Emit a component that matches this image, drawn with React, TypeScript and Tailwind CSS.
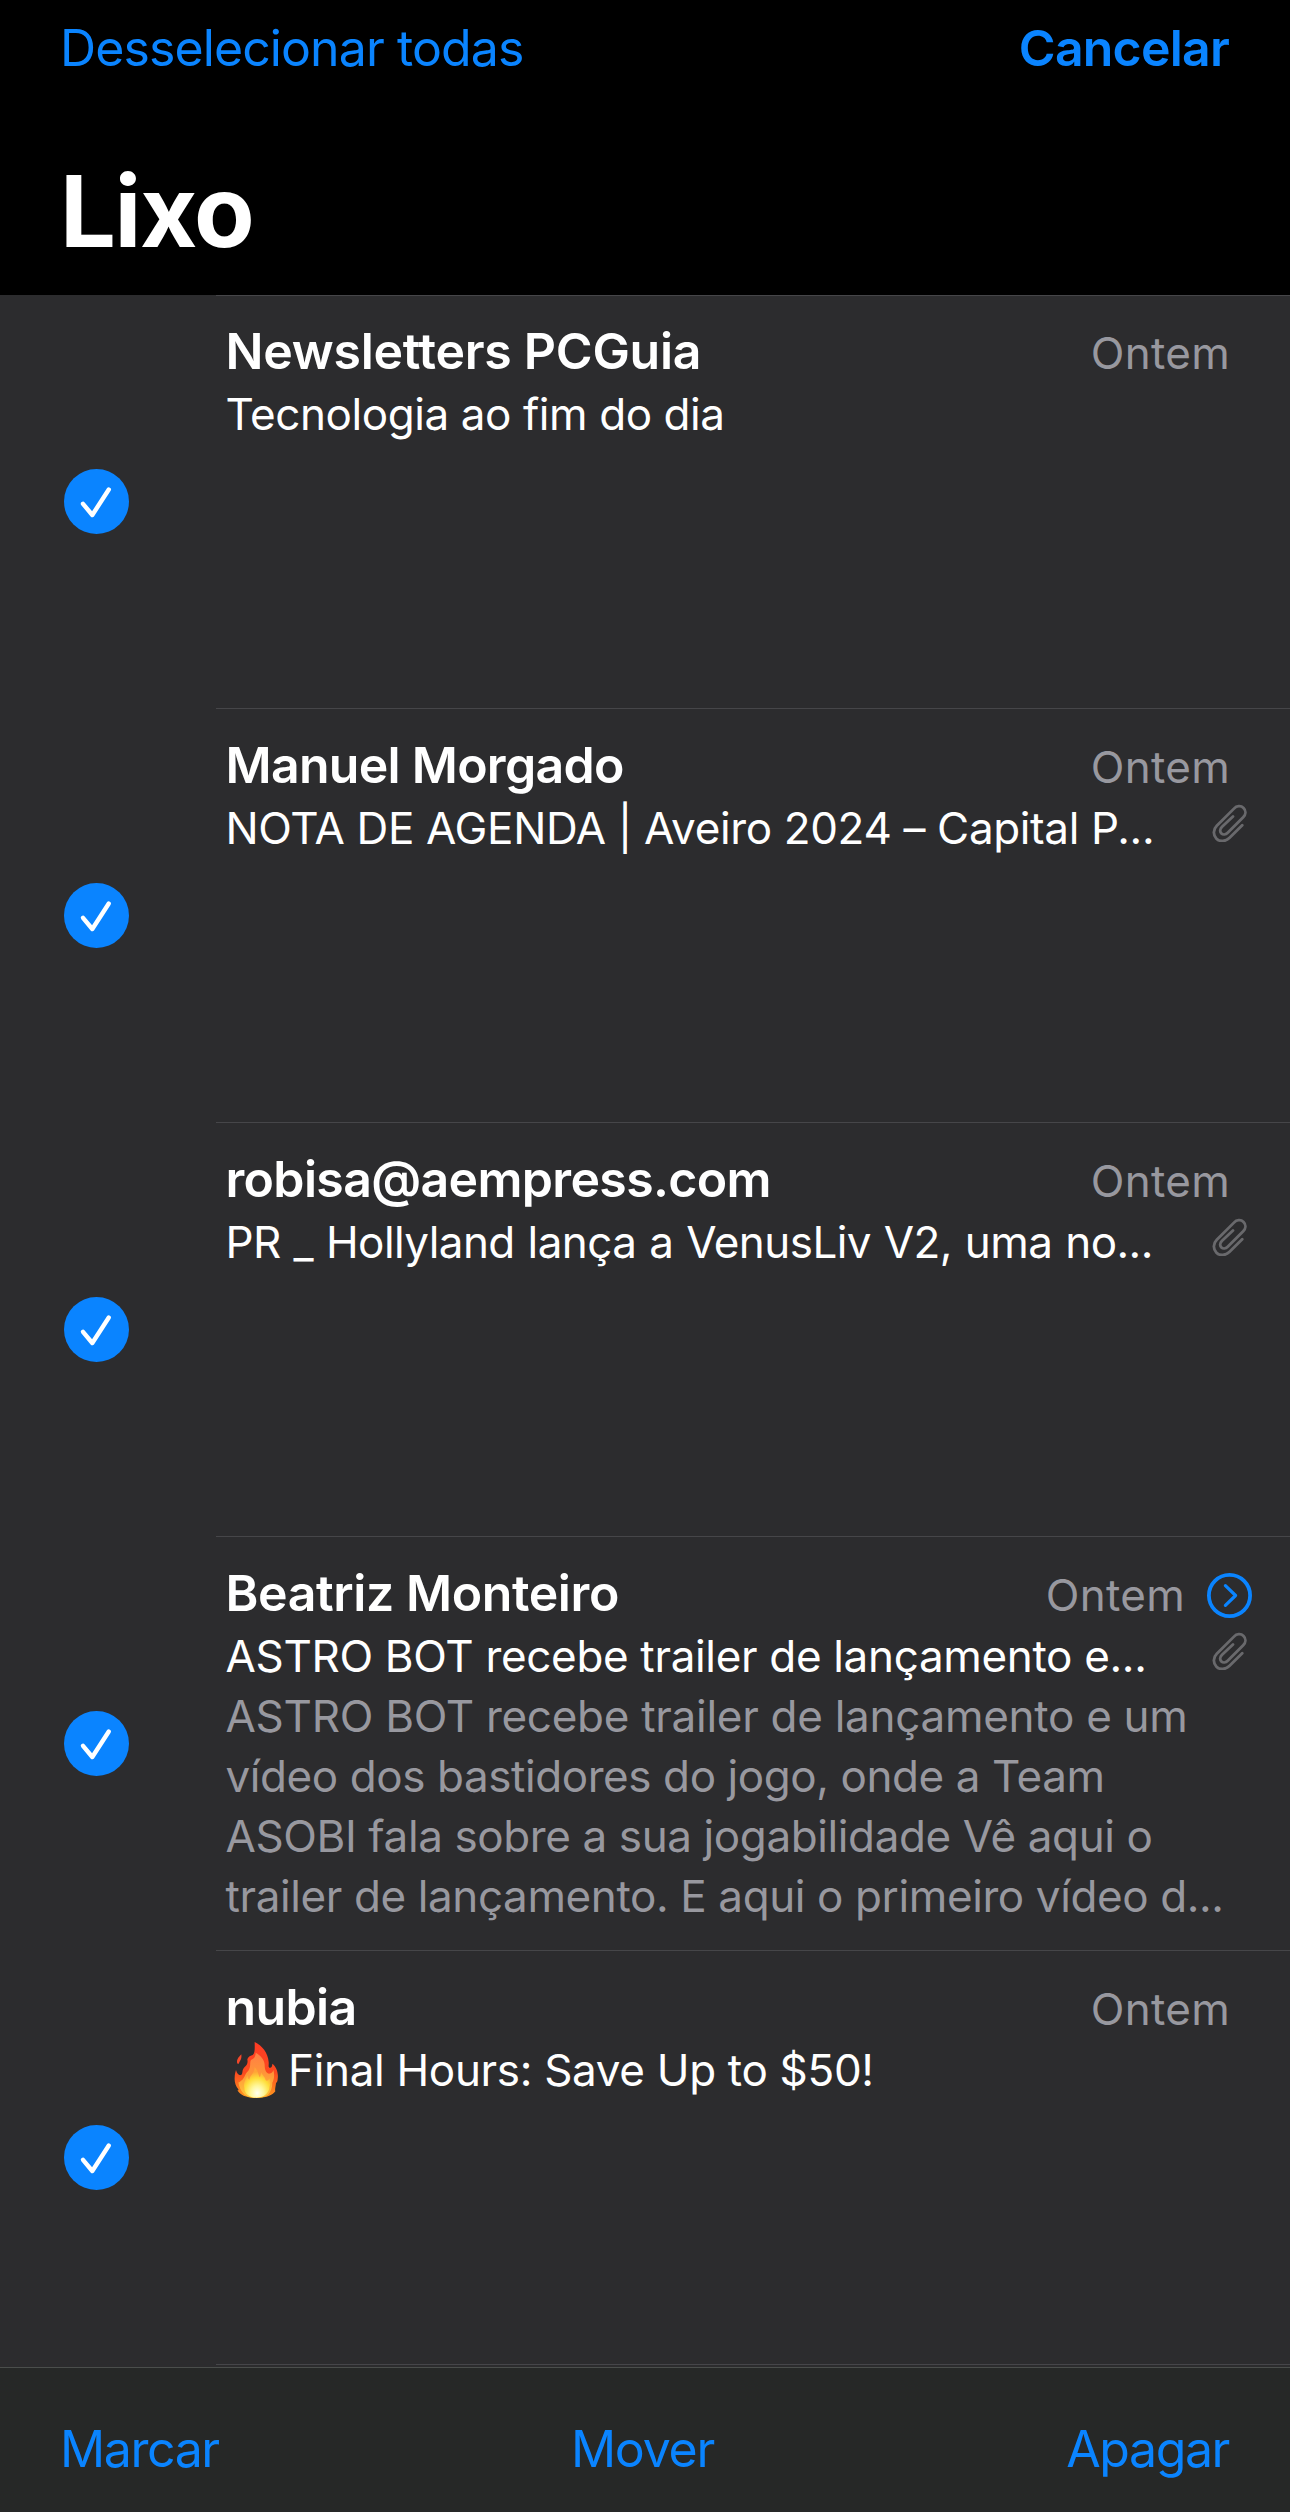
import clsx from 'clsx';

type Message = {
  sender: string;
  senderClass: string;
  subject: string;
  subjectClass: string;
  hasFlame?: boolean;
  hasAttachment?: boolean;
  isThread?: boolean;
  preview?: { text: string; className: string }[];
};

const messages: Message[] = [
  {
    sender: 'Newsletters PCGuia',
    senderClass: 'tracking-[-0.27px]',
    subject: 'Tecnologia ao fim do dia',
    subjectClass: 'tracking-[-0.42px]',
  },
  {
    sender: 'Manuel Morgado',
    senderClass: 'tracking-[-0.72px]',
    subject: 'NOTA DE AGENDA | Aveiro 2024 – Capital P...',
    subjectClass: 'tracking-[-0.36px]',
    hasAttachment: true,
  },
  {
    sender: 'robisa@aempress.com',
    senderClass: 'tracking-[-0.66px]',
    subject: 'PR _ Hollyland lança a VenusLiv V2, uma no...',
    subjectClass: 'tracking-[-0.56px] [word-spacing:1px]',
    hasAttachment: true,
  },
  {
    sender: 'Beatriz Monteiro',
    senderClass: 'tracking-[-0.4px]',
    subject: 'ASTRO BOT recebe trailer de lançamento e...',
    subjectClass: 'tracking-[-0.33px]',
    hasAttachment: true,
    isThread: true,
    preview: [
      { text: 'ASTRO BOT recebe trailer de lançamento e um', className: 'tracking-[-0.28px]' },
      { text: 'vídeo dos bastidores do jogo, onde a Team', className: 'tracking-[-0.42px]' },
      { text: 'ASOBI fala sobre a sua jogabilidade Vê aqui o', className: 'tracking-[-0.39px]' },
      { text: 'trailer de lançamento. E aqui o primeiro vídeo d...', className: 'tracking-[-0.39px]' },
    ],
  },
  {
    sender: 'nubia',
    senderClass: 'tracking-[-0.6px]',
    subject: 'Final Hours: Save Up to $50!',
    subjectClass: 'tracking-[-0.32px]',
    hasFlame: true,
  },
];

function CheckBadge() {
  return (
    <svg viewBox="0 0 65 65" className="w-[65px] h-[65px]" fill="none">
      <circle cx="32.5" cy="32.5" r="32.5" fill="#0a84ff" />
      <path d="M19 34.8 28.3 46 44.8 20.5" stroke="#fff" strokeWidth="4.4" strokeLinecap="round" strokeLinejoin="round" />
    </svg>
  );
}

function ThreadIcon() {
  return (
    <svg viewBox="0 0 45 45" className="w-[45px] h-[45px]" fill="none" stroke="#0a84ff">
      <circle cx="22.5" cy="22.5" r="20.6" strokeWidth="3.8" />
      <path d="M18.4 12.6 28.6 22.5 18.4 32.4" strokeWidth="3.2" strokeLinecap="round" strokeLinejoin="round" />
    </svg>
  );
}

function Paperclip() {
  return (
    <svg viewBox="0 0 105 115" className="w-[35px] h-[38px]" fill="none" stroke="#69696c" strokeWidth="8.5" strokeLinecap="round">
      <path d="M91 64 52 103C41 114 23 115 13 105C2 94 3 77 14 66L66 14C74 5 87 4 95 12C103 20 102 32 94 40L47 87C41 93 33 94 28 89C22 83 24 75 30 69L63 38" />
    </svg>
  );
}

function Flame() {
  return (
    <svg viewBox="36 36 132 168" className="w-[44px] h-[56px] ml-[8.5px] mr-[10px] shrink-0">
      <defs>
        <linearGradient id="flameOuter" x1="0" y1="0" x2="0" y2="1">
          <stop offset="0" stopColor="#ff3b24" />
          <stop offset="0.55" stopColor="#fb4a1f" />
          <stop offset="1" stopColor="#ff9a1f" />
        </linearGradient>
        <linearGradient id="flameMid" x1="0" y1="0" x2="0" y2="1">
          <stop offset="0" stopColor="#ff7e45" />
          <stop offset="0.45" stopColor="#ff9438" />
          <stop offset="1" stopColor="#ffc93a" />
        </linearGradient>
        <radialGradient id="flameCore" cx="0.5" cy="0.85" r="0.7">
          <stop offset="0" stopColor="#fffff0" />
          <stop offset="0.35" stopColor="#fff79a" />
          <stop offset="0.7" stopColor="#ffde3a" />
          <stop offset="1" stopColor="#ffa436" />
        </radialGradient>
      </defs>
      <path
        d="M98 36C120 47 138 68 140 96C141 104 138 111 142 113C149 115 151 107 151 101C163 110 170 128 167 147C167 153 165 156 162 160C161 170 158 178 160 184C152 194 138 204 103 204C70 204 54 194 46 181C49 182 50 181 49 178C41 168 37 155 38 143C38 134 40 127 42 120C45 132 51 137 57 135C64 132 58 120 68 111C76 104 78 98 76 88C79 81 83 77 92 75C100 68 98 50 98 36Z"
        fill="url(#flameOuter)"
      />
      <path d="M58 73C53 79 44 86 45 97C46 103 50 104 52 97C54 92 60 88 58 73Z" fill="#f4482a" />
      <path
        d="M101 68C115 76 127 88 128 104C128 115 130 128 141 131C149 131 153 125 154 120C158 133 157 146 151 158C151 172 147 184 138 194C120 207 86 207 68 194C57 185 51 170 49 157C52 158 53 155 57 152C68 147 68 130 79 122C88 111 82 98 87 90C97 86 101 78 101 68Z"
        fill="url(#flameMid)"
      />
      <path
        d="M98 112C98 130 84 135 82 149C77 148 78 139 76 136C71 149 63 159 67 173C66 187 78 203 103 203C128 203 142 188 143 169C146 160 147 153 142 145C140 151 136 154 131 151C129 139 121 138 119 127C115 131 117 139 113 142C109 133 108 122 98 112Z"
        fill="url(#flameCore)"
      />
    </svg>
  );
}

function MessageRow({ message }: { message: Message }) {
  return (
    <li className="flex items-center h-[414px] first:h-[413px]">
      <div className="w-[216px] pl-[63.5px] shrink-0">
        <CheckBadge />
      </div>
      <div className="flex-1 min-w-0 h-full flex flex-col justify-end border-t border-[#464649]">
        <div className="h-[412px] shrink-0 pl-[9.5px] pr-[60px] pt-[25px] leading-[60px] text-[44px] whitespace-nowrap">
          <div className="flex items-baseline justify-between">
            <h2 className={clsx('text-[50px] font-semibold text-white', message.senderClass)}>{message.sender}</h2>
            <div className="flex items-center h-[60px]">
              <span className="text-[44px] text-[#98989f] tracking-[0.3px] pt-[4px]">Ontem</span>
              {message.isThread && (
                <span className="ml-[22px] mr-[-22px] pt-[5px]">
                  <ThreadIcon />
                </span>
              )}
            </div>
          </div>
          <div className="flex justify-between mt-[3px] text-white">
            <p className={clsx('flex items-center', message.subjectClass)}>
              {message.hasFlame && <Flame />}
              {message.subject}
            </p>
            {message.hasAttachment && (
              <span className="pt-[6px] mr-[-17px]">
                <Paperclip />
              </span>
            )}
          </div>
          {message.preview && (
            <p className="text-[#98989f]">
              {message.preview.map((line) => (
                <span key={line.text} className={clsx('block', line.className)}>
                  {line.text}
                </span>
              ))}
            </p>
          )}
        </div>
      </div>
    </li>
  );
}

export default function App() {
  return (
    <div className="flex flex-col w-[1290px] h-[2512px] overflow-hidden bg-[#2c2c2e] font-['Inter',sans-serif]">
      <header className="h-[295px] shrink-0 bg-black pt-[18px] pl-[60px] pr-[61px]">
        <div className="flex justify-between text-[50px] leading-[60px] text-[#0a84ff]">
          <button className="tracking-[-0.9px]">Desselecionar todas</button>
          <button className="font-semibold tracking-[-0.79px]">Cancelar</button>
        </div>
        <h1 className="mt-[73px] text-[99px] leading-[120px] font-bold tracking-[-1.38px] text-white">Lixo</h1>
      </header>

      <ul className="h-[2072px] shrink-0 overflow-hidden">
        {messages.map((message) => (
          <MessageRow key={message.sender} message={message} />
        ))}
        <li className="ml-[216px] border-t border-[#464649]" />
      </ul>

      <footer className="flex-1 flex items-start justify-between border-t border-[#4b4e4c] bg-[#262827] pt-[51px] pl-[60px] pr-[61px] text-[50px] leading-[60px] text-[#0a84ff]">
        <button className="tracking-[-1.4px]">Marcar</button>
        <button className="tracking-[-1.24px]">Mover</button>
        <button className="tracking-[-1.4px]">Apagar</button>
      </footer>
    </div>
  );
}
